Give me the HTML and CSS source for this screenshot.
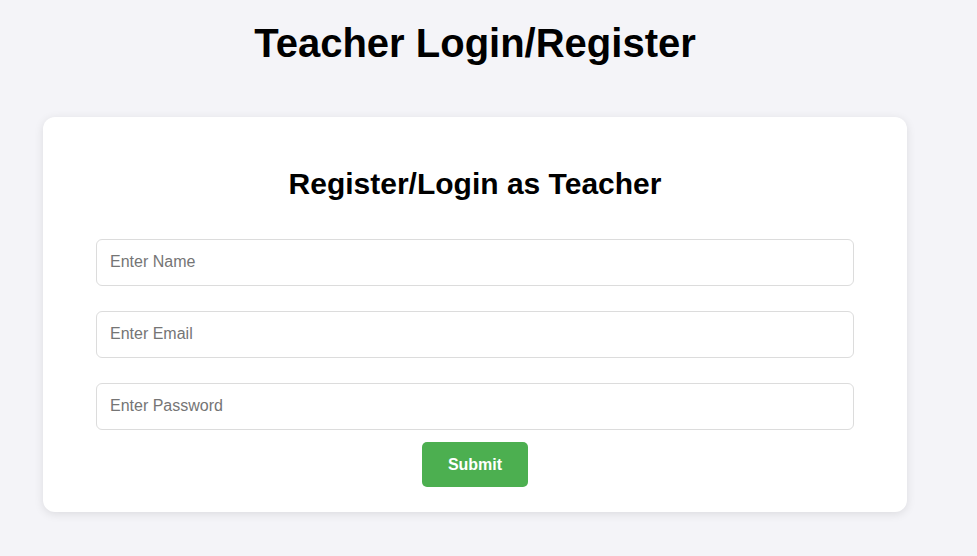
FILE: index.html
```html
<!DOCTYPE html>
<html lang="en">
<head>
<meta charset="utf-8">
<title>Teacher Login/Register</title>
<link rel="stylesheet" href="styles.css">
</head>
<body>
<div class="page">
  <h1 class="title">Teacher Login/Register</h1>
  <div class="card">
    <h2 class="card-title">Register/Login as Teacher</h2>
    <form class="form">
      <input class="field" type="text" placeholder="Enter Name">
      <input class="field" type="email" placeholder="Enter Email">
      <input class="field field-last" type="password" placeholder="Enter Password">
      <button class="submit" type="button">Submit</button>
    </form>
  </div>
</div>
</body>
</html>
```
FILE: styles.css
```css
html, body {
  margin: 0;
  padding: 0;
  background: #f4f4f8;
  font-family: "Liberation Sans", Arial, sans-serif;
  color: #000;
}
.page {
  width: 950px;
  padding-top: 20px;
  padding-bottom: 40px;
}
.title {
  margin: 0 0 51px;
  font-size: 40px;
  line-height: 46px;
  font-weight: bold;
  text-align: center;
}
.card {
  margin: 0 43px;
  background: #fff;
  border-radius: 12px;
  box-shadow: 0 2px 10px rgba(0, 0, 0, 0.1);
  padding: 49px 53px 25px;
}
.card-title {
  margin: 0 0 38px;
  font-size: 30px;
  line-height: 35px;
  font-weight: bold;
  text-align: center;
}
.form {
  display: flex;
  flex-direction: column;
  align-items: center;
}
.field {
  box-sizing: border-box;
  width: 100%;
  height: 47px;
  margin: 0 0 25px;
  padding: 0 13px 2px;
  border: 1px solid #dcdcdc;
  border-radius: 6px;
  font-family: "Liberation Sans", Arial, sans-serif;
  font-size: 16px;
  color: #333;
  background: #fff;
  outline: none;
}
.field::placeholder {
  color: #757575;
}
.field-last {
  margin-bottom: 12px;
}
.submit {
  box-sizing: border-box;
  height: 45px;
  padding: 0 26px;
  border: none;
  border-radius: 5px;
  background: #4caf50;
  color: #fff;
  font-family: "Liberation Sans", Arial, sans-serif;
  font-size: 16px;
  font-weight: bold;
  cursor: pointer;
}
```
